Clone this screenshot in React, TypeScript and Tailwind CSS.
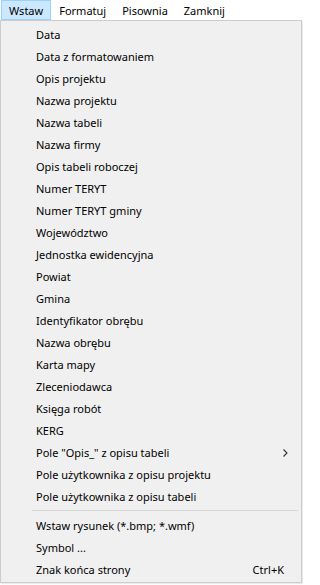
import React from 'react';

type Item = { label: string; shortcut?: string; submenu?: boolean } | 'sep';

const items: Item[] = [
  { label: 'Data' },
  { label: 'Data z formatowaniem' },
  { label: 'Opis projektu' },
  { label: 'Nazwa projektu' },
  { label: 'Nazwa tabeli' },
  { label: 'Nazwa firmy' },
  { label: 'Opis tabeli roboczej' },
  { label: 'Numer TERYT' },
  { label: 'Numer TERYT gminy' },
  { label: 'Województwo' },
  { label: 'Jednostka ewidencyjna' },
  { label: 'Powiat' },
  { label: 'Gmina' },
  { label: 'Identyfikator obrębu' },
  { label: 'Nazwa obrębu' },
  { label: 'Karta mapy' },
  { label: 'Zleceniodawca' },
  { label: 'Księga robót' },
  { label: 'KERG' },
  { label: 'Pole "Opis_" z opisu tabeli', submenu: true },
  { label: 'Pole użytkownika z opisu projektu' },
  { label: 'Pole użytkownika z opisu tabeli' },
  'sep',
  { label: 'Wstaw rysunek (*.bmp; *.wmf)' },
  { label: 'Symbol ...' },
  { label: 'Znak końca strony', shortcut: 'Ctrl+K' },
];

const menuBar = ['Wstaw', 'Formatuj', 'Pisownia', 'Zamknij'];

const Chevron = () => (
  <svg width="5" height="8" viewBox="0 0 5 8" className="block">
    <path d="M0.5 0.5 L4 4 L0.5 7.5" fill="none" stroke="#333" strokeWidth="1.1" />
  </svg>
);

export default function App() {
  return (
    <div className="w-[303px] h-[585px] bg-white overflow-hidden text-[11px] text-black font-['Noto_Sans',sans-serif] leading-none">
      {/* Menu bar */}
      <div className="flex h-[20px] pl-[1px]">
        {menuBar.map((m, i) => (
          <div
            key={m}
            className={`flex items-center pt-[1px] px-[7px] ${
              i === 0 ? 'bg-[#cce8ff] border border-[#99d1ff]' : 'border border-transparent'
            }`}
          >
            {m}
          </div>
        ))}
      </div>

      {/* Dropdown */}
      <div className="w-[302px] bg-[#f0f0f0] border border-[#cccccc] p-[2px] shadow-[1px_1px_1px_rgba(0,0,0,0.08)]">
        {items.map((it, idx) =>
          it === 'sep' ? (
            <div key={idx} className="h-[7px] flex items-center pl-[29px] pr-[1px]">
              <div className="h-px w-full bg-[#d7d7d7]" />
            </div>
          ) : (
            <div key={idx} className="h-[22px] flex items-center pt-[1px] pl-[33px] pr-[15px]">
              <span className="flex-1 whitespace-nowrap">{it.label}</span>
              {it.shortcut && <span className="whitespace-nowrap">{it.shortcut}</span>}
              {it.submenu && (
                <span className="-mr-[4px]">
                  <Chevron />
                </span>
              )}
            </div>
          )
        )}
      </div>
    </div>
  );
}
